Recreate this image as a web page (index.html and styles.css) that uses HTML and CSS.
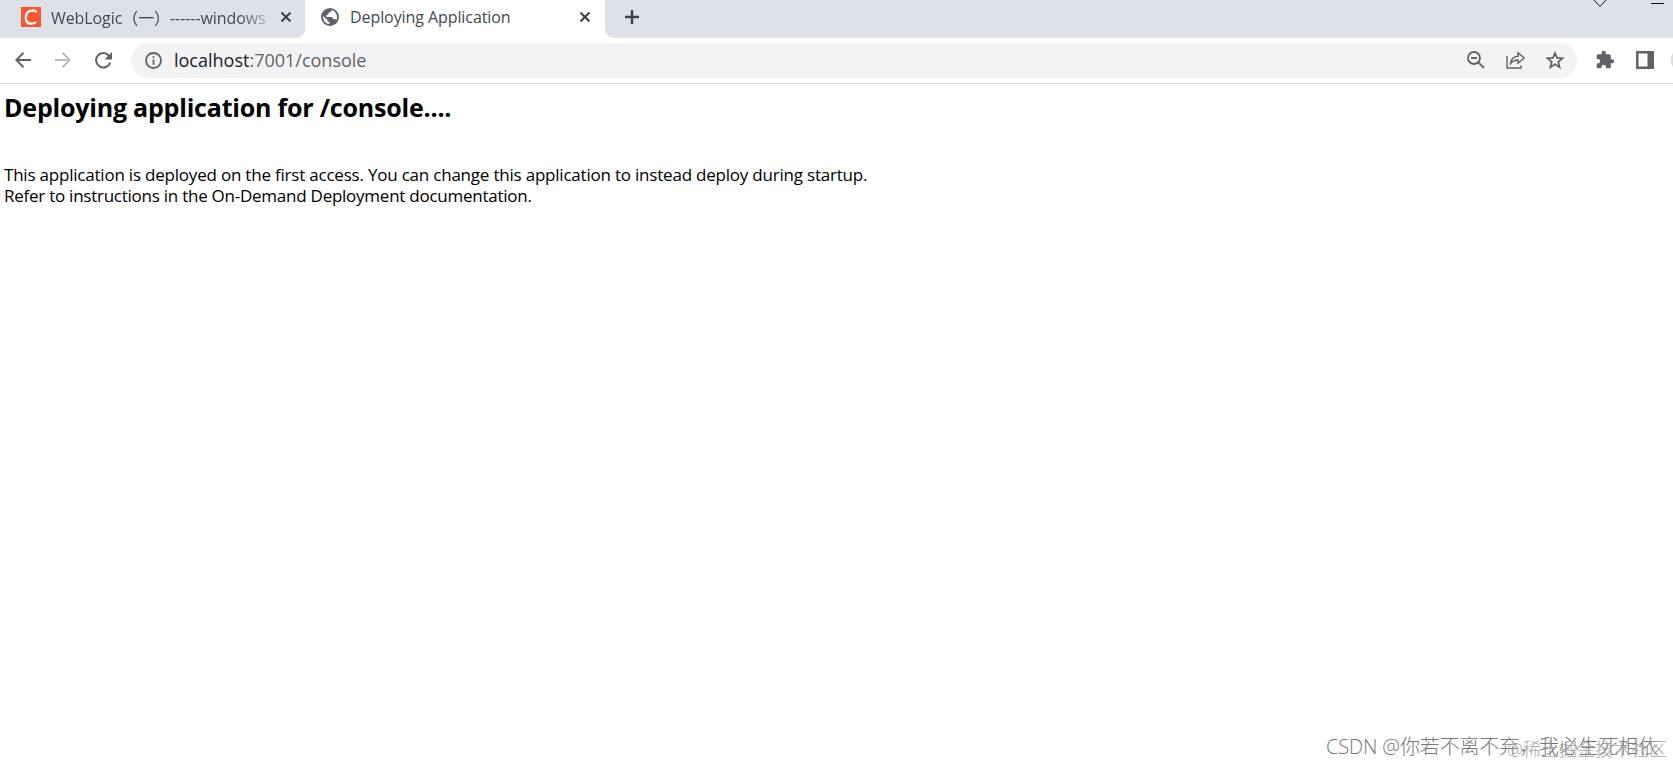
FILE: index.html
```html
<!DOCTYPE html>
<html lang="en">
<head>
    <meta charset="UTF-8">
    <meta name="viewport" content="width=device-width, initial-scale=1.0">
    <title>Deploying Application</title>
    <link rel="stylesheet" href="styles.css">
</head>
<body>
    <!-- Tab strip -->
    <div class="tab-strip">
        <div class="tab">
            <svg class="favicon" width="20" height="20" viewBox="0 0 20 20">
                <rect width="20" height="20" fill="#fc5531"/>
                <path d="M15.8 5.2C13.8 3 8.500 2.800 6.300 5.600C4 8.700 4.300 14 6.800 15.700C9.200 17.300 13 16.800 15 15" fill="none" stroke="#fff" stroke-width="2.300"/>
            </svg>
            <span class="tab-title tab-title-faded">WebLogic（一）------windows</span>
            <svg class="tab-close" width="10" height="10" viewBox="0 0 10 10">
                <path d="M0.500 0.500L9.500 9.500M9.500 0.500L0.500 9.500"/>
            </svg>
        </div>
        <div class="tab tab-active">
            <svg class="favicon" width="18" height="18" viewBox="0 0 18 18">
                <circle cx="9" cy="9" r="9" fill="#5f6368"/>
                <path d="M10.500 2C10.500 4 9 4.500 7.500 4.500V6.500L5.500 7V9H10.500C11.500 9 12 10 12 11H14L15.500 12C16.500 9 16 6 14 4C13 3 12 2.300 10.500 2ZM2 8L6.500 12V13.500L8.500 14V16C4.500 16 1.500 12 2 8Z" fill="#fff"/>
            </svg>
            <span class="tab-title">Deploying Application</span>
            <svg class="tab-close" width="10" height="10" viewBox="0 0 10 10">
                <path d="M0.500 0.500L9.500 9.500M9.500 0.500L0.500 9.500"/>
            </svg>
        </div>
        <div class="tab-rest">
            <svg class="new-tab" width="14" height="14" viewBox="0 0 14 14">
                <path d="M7 0V14M0 7H14"/>
            </svg>
            <svg class="window-controls" width="80" height="10" viewBox="0 0 80 10">
                <path d="M1 0L7 6.500L13 0M58 3.500H71"/>
            </svg>
        </div>
    </div>

    <!-- Toolbar -->
    <div class="toolbar">
        <svg class="nav-icon" width="16" height="16" viewBox="0 0 16 16">
            <path d="M16 8H1.500M8.500 0.800L1.300 8L8.500 15.200"/>
        </svg>
        <svg class="nav-icon nav-icon-disabled" width="16" height="16" viewBox="0 0 16 16">
            <path d="M0 8H14.500M7.500 0.800L14.700 8L7.500 15.200"/>
        </svg>
        <svg class="nav-icon" width="17" height="17" viewBox="0 0 17 17">
            <path d="M15.200 10.500A7.200 7.200 0 1 1 13.700 3.500L15.500 5.300"/>
            <path class="solid" d="M17 0V7.500H9.500Z"/>
        </svg>
        <div class="address-bar">
            <svg class="bar-icon info" width="17" height="17" viewBox="0 0 17 17">
                <circle cx="8.500" cy="8.500" r="7.500"/>
                <path d="M8.500 7.500V12.800M8.500 4.200V6"/>
            </svg>
            <span class="url"><span class="host">localhost</span>:7001/console</span>
            <svg class="bar-icon" width="18" height="18" viewBox="0 0 18 18">
                <circle cx="7" cy="7" r="6"/>
                <path d="M11.300 11.300L17 17M4 7H10"/>
            </svg>
            <svg class="bar-icon share" width="19" height="18" viewBox="0 0 19 18">
                <path d="M1 5V17H15V14.500M4.500 12.500C5 8 7.500 5.500 12 5.200V1.800L18.200 7L12 12.200V9C8.500 9 6.500 10 4.500 12.500Z"/>
            </svg>
            <svg class="bar-icon" width="18" height="18" viewBox="0 0 18 18">
                <path d="M9 2L11.100 7L16.400 7.400L12.300 10.900L13.600 16.200L9 13.300L4.400 16.200L5.700 10.900L1.600 7.400L6.900 7Z"/>
            </svg>
        </div>
        <svg class="extensions" width="20" height="20" viewBox="0 0 24 24">
            <path d="M20.500 11H19V7c0-1.100-.9-2-2-2h-4V3.500C13 2.120 11.880 1 10.500 1S8 2.120 8 3.500V5H4c-1.100 0-1.990.9-1.990 2v3.800H3.500c1.490 0 2.700 1.210 2.700 2.700s-1.210 2.700-2.700 2.700H2V20c0 1.100.9 2 2 2h3.800v-1.500c0-1.490 1.210-2.700 2.700-2.700s2.700 1.210 2.700 2.700V22H17c1.100 0 2-.9 2-2v-4h1.500c1.380 0 2.500-1.120 2.500-2.500S21.880 11 20.500 11z"/>
        </svg>
        <svg class="side-panel" width="18" height="18" viewBox="0 0 18 18">
            <path d="M0 0H18V18H0ZM2.500 2.500V15.500H11.500V2.500Z" fill-rule="evenodd"/>
        </svg>
        <div class="avatar"></div>
    </div>

    <!-- Page -->
    <div class="content">
        <h1>Deploying application for /console....</h1>
        <p>This application is deployed on the first access. You can change this application to instead deploy during startup.<br>
        <span class="refer">Refer to instructions in the On-Demand Deployment documentation.</span></p>
    </div>

    <div class="watermark watermark-csdn">CSDN @你若不离不弃，我必生死相依</div>
    <div class="watermark watermark-juejin">@稀土掘金技术社区</div>
</body>
</html>
```

FILE: styles.css
```css
body {
    margin: 0;
    height: 766px;
    overflow: hidden;
    background-color: #fff;
    font-family: "Open Sans", "Noto Sans CJK SC", sans-serif;
}

svg {
    display: block;
    flex-shrink: 0;
}

/* Tab strip */
.tab-strip {
    display: flex;
    height: 38px;
    background-color: #fff;
}

.tab {
    display: flex;
    align-items: center;
    box-sizing: border-box;
    width: 305px;
    height: 38px;
    padding: 0 14px 4px 21px;
    background-color: #dee1e8;
    border-bottom-right-radius: 9px;
}

.tab-active {
    width: 300px;
    padding: 0 15px 4px 16px;
    background-color: #fff;
}

.tab-title {
    flex: 1;
    margin: 0 11px 0 10px;
    overflow: hidden;
    white-space: nowrap;
    font-size: 16px;
    letter-spacing: -0.08px;
    color: #45494d;
}

.tab-active .tab-title {
    margin-left: 11px;
}

.tab-title-faded {
    -webkit-mask-image: linear-gradient(to right, #000 86%, transparent 103%);
    mask-image: linear-gradient(to right, #000 86%, transparent 103%);
}

.tab-close,
.new-tab {
    fill: none;
    stroke: #3c4043;
    stroke-width: 2;
}

.tab-rest {
    display: flex;
    flex: 1;
    justify-content: space-between;
    background-color: #dee1e8;
    border-bottom-left-radius: 9px;
}

.new-tab {
    margin: 10px 0 0 20px;
    stroke-width: 2.4;
}

.window-controls {
    fill: none;
    stroke: #111;
    stroke-width: 1;
}

/* Toolbar */
.toolbar {
    display: flex;
    align-items: center;
    box-sizing: border-box;
    height: 46px;
    padding: 0 0 1px 15px;
    border-bottom: 1px solid #d6d8db;
    overflow: hidden;
}

.nav-icon {
    margin-right: 24px;
    fill: none;
    stroke: #5f6368;
    stroke-width: 2;
}

.nav-icon-disabled {
    stroke: #babcbe;
}

.nav-icon .solid {
    fill: #5f6368;
    stroke: none;
}

.address-bar {
    display: flex;
    flex-shrink: 0;
    align-items: center;
    box-sizing: border-box;
    width: 1446px;
    height: 35px;
    padding: 0 13px 0 14px;
    margin-left: -5px;
    border-radius: 18px;
    background-color: #f1f3f4;
}

.bar-icon {
    margin-right: 21px;
    fill: none;
    stroke: #5f6368;
    stroke-width: 1.8;
}

.bar-icon:last-child {
    margin-right: 0;
}

.info {
    margin-right: 12px;
}

.share {
    stroke-width: 1.4;
}

.url {
    flex: 1;
    font-size: 18px;
    color: #5f6368;
}

.host {
    color: #202124;
}

.extensions {
    margin-left: 18px;
    fill: #5f6368;
}

.side-panel {
    margin-left: 21px;
    fill: #5f6368;
}

.avatar {
    flex-shrink: 0;
    width: 28px;
    height: 28px;
    margin-left: 17px;
    border-radius: 50%;
    background-color: #dcdcdc;
}

/* Page */
.content {
    padding: 0 4px;
    color: #000;
}

h1 {
    margin: 4px 0 0;
    font-size: 25px;
    line-height: 38px;
    font-weight: 700;
    letter-spacing: -0.2px;
}

p {
    margin: 38px 0 0;
    font-size: 17px;
    line-height: 21px;
    letter-spacing: -0.21px;
    white-space: nowrap;
}

.refer {
    letter-spacing: -0.25px;
}

/* Watermarks overlap each other in the corner */
.watermark {
    position: absolute;
    white-space: nowrap;
    font-weight: 300;
}

.watermark-csdn {
    right: 15px;
    bottom: 6px;
    font-size: 20px;
    letter-spacing: -0.15px;
    color: #777;
}

.watermark-juejin {
    right: 6px;
    bottom: 5px;
    font-size: 18px;
    color: #a5a5a5;
}
```
